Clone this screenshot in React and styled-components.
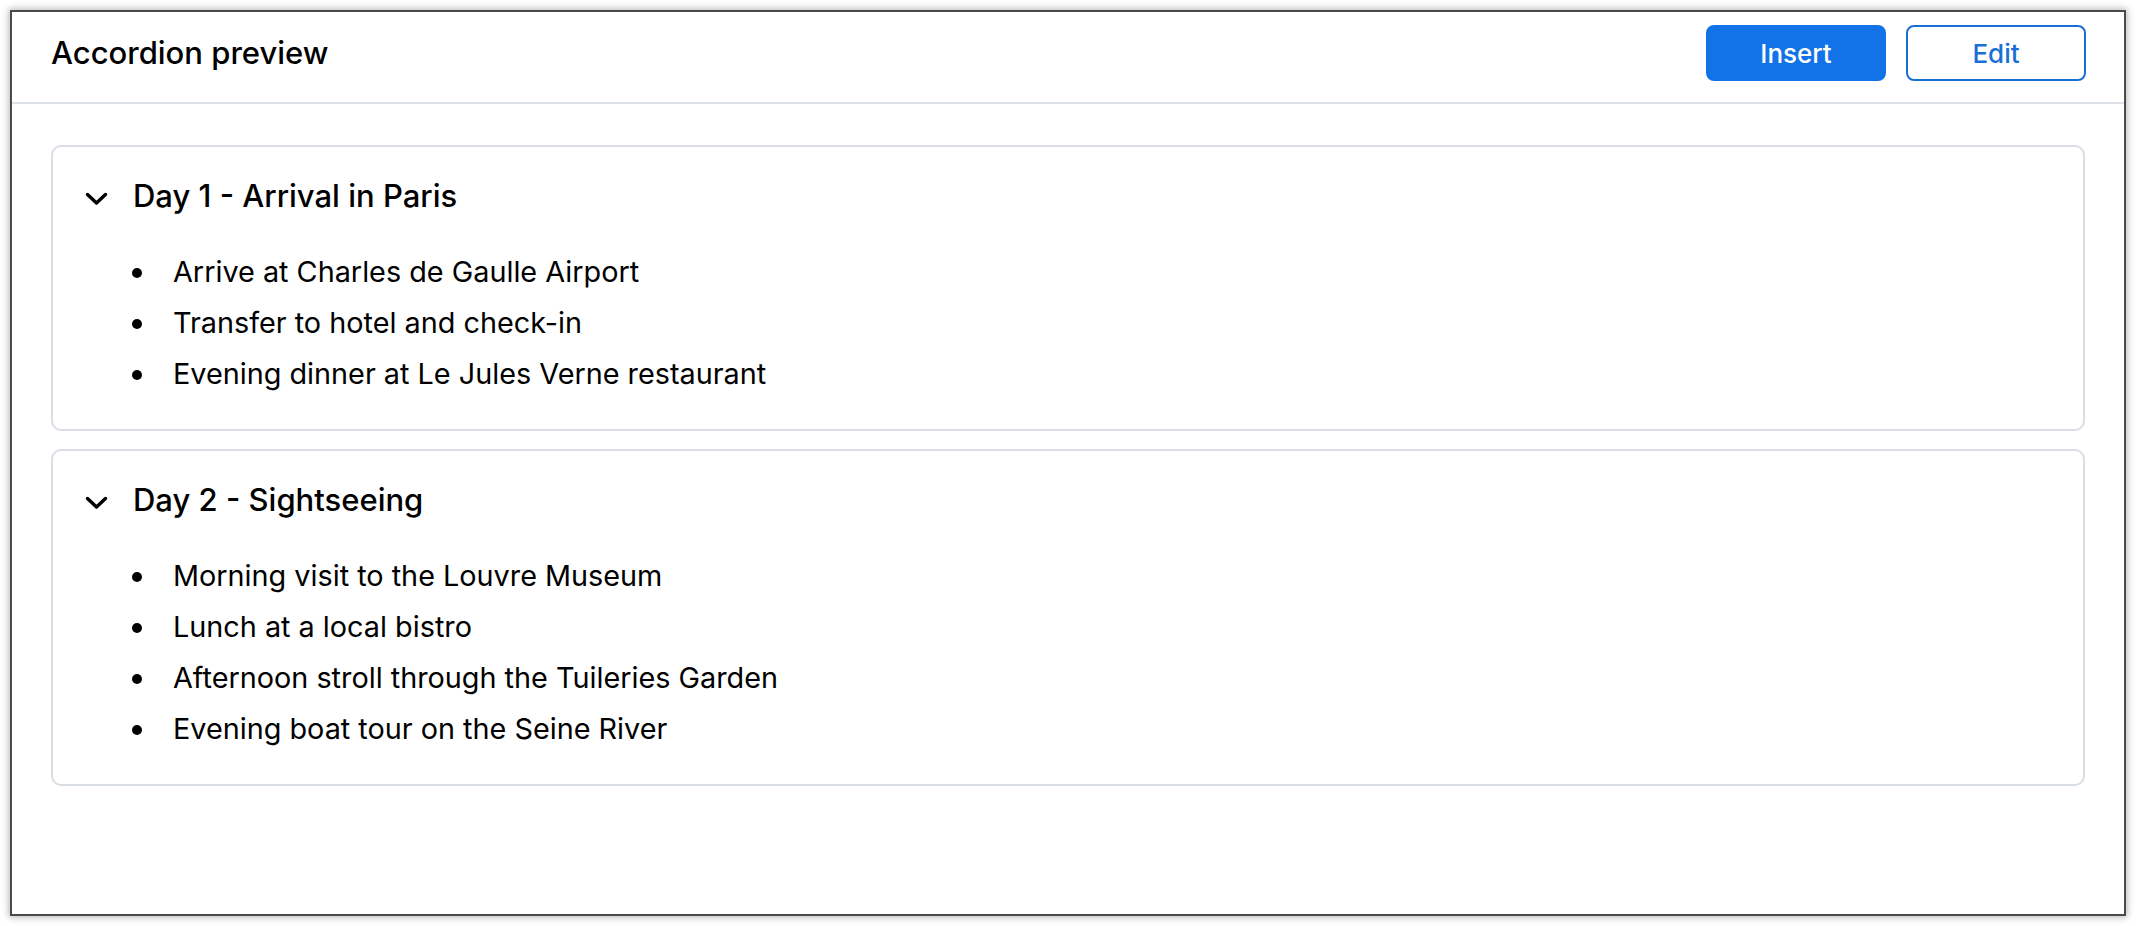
import React from "react";
import styled, { createGlobalStyle } from "styled-components";

const GlobalStyle = createGlobalStyle`
  html, body {
    margin: 0;
    padding: 0;
    background: #fff;
  }
  body {
    font-family: Inter, "Noto Sans", "Liberation Sans", sans-serif;
    color: #000;
  }
  * { box-sizing: border-box; }
`;

const days = [
  {
    title: "Day 1 - Arrival in Paris",
    items: [
      "Arrive at Charles de Gaulle Airport",
      "Transfer to hotel and check-in",
      "Evening dinner at Le Jules Verne restaurant",
    ],
  },
  {
    title: "Day 2 - Sightseeing",
    items: [
      "Morning visit to the Louvre Museum",
      "Lunch at a local bistro",
      "Afternoon stroll through the Tuileries Garden",
      "Evening boat tour on the Seine River",
    ],
  },
];

const Page = styled.div`
  height: 926px;
  padding: 10px;
`;

const Window = styled.div`
  height: 100%;
  display: flex;
  flex-direction: column;
  background: #fff;
  border: 2px solid #4a4a4a;
  box-shadow: 0 0 7px 1px rgba(0, 0, 0, 0.3);
`;

const Header = styled.header`
  display: flex;
  align-items: center;
  justify-content: space-between;
  padding: 13px 38px 21px 39px;
  border-bottom: 2px solid #dde1e8;
`;

const Title = styled.h1`
  margin: 0;
  font-size: 31px;
  font-weight: 500;
  line-height: 40px;
`;

const Actions = styled.div`
  display: flex;
  gap: 20px;
`;

const Button = styled.button`
  width: 180px;
  height: 56px;
  border-radius: 8px;
  font-family: inherit;
  font-size: 26px;
  font-weight: 500;
  cursor: pointer;
  border: 2px solid ${(p) => (p.$primary ? "#1273e8" : "#1a6fd6")};
  background: ${(p) => (p.$primary ? "#1273e8" : "#fff")};
  color: ${(p) => (p.$primary ? "#fff" : "#1a6fd6")};
`;

const Content = styled.main`
  display: flex;
  flex-direction: column;
  gap: 18px;
  padding: 41px 39px;
`;

const Section = styled.section`
  border: 2px solid #d9dde4;
  border-radius: 10px;
  padding: 29px 0 30px;
`;

const Trigger = styled.div`
  display: flex;
  align-items: center;
  gap: 25px;
  padding-left: 32px;
`;

const Chevron = styled.svg`
  width: 23px;
  height: 14px;
  margin-top: 6px;
  flex: none;
`;

const SectionTitle = styled.h2`
  margin: 0;
  font-size: 31px;
  font-weight: 500;
  line-height: 40px;
`;

const List = styled.ul`
  margin: 30px 0 0;
  padding: 0 0 0 79px;
  list-style: none;
`;

const Item = styled.li`
  display: flex;
  align-items: center;
  font-size: 28.8px;
  line-height: 51px;
`;

const Dot = styled.span`
  width: 10px;
  height: 10px;
  margin: 3px 31px 0 0;
  border-radius: 50%;
  background: #000;
  flex: none;
`;

const ChevronDown = () => (
  <Chevron viewBox="0 0 23 14">
    <polyline
      points="2.5,2.5 11.5,11 20.5,2.5"
      fill="none"
      stroke="#000"
      strokeWidth="3.4"
      strokeLinecap="round"
      strokeLinejoin="round"
    />
  </Chevron>
);

export default function App() {
  return (
    <>
      <GlobalStyle />
      <Page>
        <Window>
          <Header>
            <Title>Accordion preview</Title>
            <Actions>
              <Button $primary>Insert</Button>
              <Button>Edit</Button>
            </Actions>
          </Header>
          <Content>
            {days.map((day) => (
              <Section key={day.title}>
                <Trigger>
                  <ChevronDown />
                  <SectionTitle>{day.title}</SectionTitle>
                </Trigger>
                <List>
                  {day.items.map((item) => (
                    <Item key={item}>
                      <Dot />
                      {item}
                    </Item>
                  ))}
                </List>
              </Section>
            ))}
          </Content>
        </Window>
      </Page>
    </>
  );
}
